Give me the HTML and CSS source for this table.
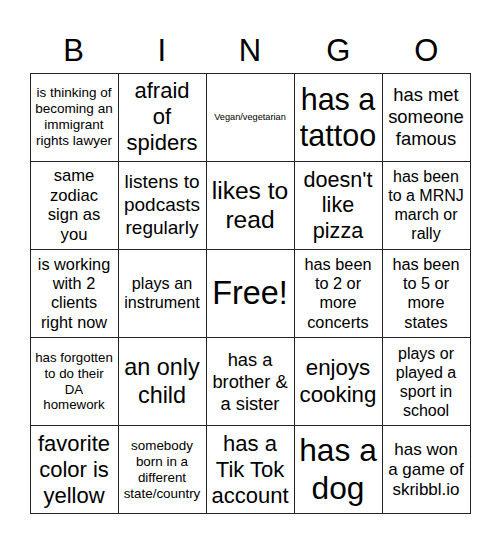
FILE: index.html
```html
<!DOCTYPE html>
<html>
<head>
<meta charset="utf-8">
<link rel="stylesheet" href="styles.css">
</head>
<body>
<div class="card">
  <div class="head">
    <span>B</span><span>I</span><span>N</span><span>G</span><span>O</span>
  </div>
  <div class="grid">
    <div class="cell s134">is thinking of<br>becoming an<br>immigrant<br>rights lawyer</div>
    <div class="cell s22">afraid<br>of<br>spiders</div>
    <div class="cell s91">Vegan/vegetarian</div>
    <div class="cell s304">has a<br>tattoo</div>
    <div class="cell s183">has met<br>someone<br>famous</div>

    <div class="cell s165">same<br>zodiac<br>sign as<br>you</div>
    <div class="cell s19">listens to<br>podcasts<br>regularly</div>
    <div class="cell s245">likes to<br>read</div>
    <div class="cell s215">doesn't<br>like<br>pizza</div>
    <div class="cell s16">has been<br>to a MRNJ<br>march or<br>rally</div>

    <div class="cell s162">is working<br>with 2<br>clients<br>right now</div>
    <div class="cell s161">plays an<br>instrument</div>
    <div class="cell s324">Free!</div>
    <div class="cell s162">has been<br>to 2 or<br>more<br>concerts</div>
    <div class="cell s162">has been<br>to 5 or<br>more<br>states</div>

    <div class="cell s132">has forgotten<br>to do their<br>DA<br>homework</div>
    <div class="cell s234">an only<br>child</div>
    <div class="cell s182">has a<br>brother &amp;<br>a sister</div>
    <div class="cell s222">enjoys<br>cooking</div>
    <div class="cell s16">plays or<br>played a<br>sport in<br>school</div>

    <div class="cell s22">favorite<br>color is<br>yellow</div>
    <div class="cell s133">somebody<br>born in a<br>different<br>state/country</div>
    <div class="cell s22">has a<br>Tik Tok<br>account</div>
    <div class="cell s316">has a<br>dog</div>
    <div class="cell s17">has won<br>a game of<br>skribbl.io</div>
  </div>
</div>
</body>
</html>
```

FILE: styles.css
```css
html, body {
  margin: 0;
  padding: 0;
  background: #fff;
}
body {
  font-family: "Liberation Sans", Arial, sans-serif;
  color: #000;
  width: 500px;
  height: 544px;
}
.card {
  width: 441px;
  margin: 0 auto;
  padding-top: 33px;
}
.head {
  display: grid;
  grid-template-columns: repeat(5, 1fr);
  height: 36px;
  line-height: 36px;
  font-size: 31px;
  text-align: center;
  margin-bottom: 3.5px;
}
.grid {
  display: grid;
  grid-template-columns: repeat(5, 88px);
  grid-auto-rows: 88.2px;
  border-left: 1px solid #222;
  border-top: 1px solid #222;
  box-sizing: border-box;
  width: 441px;
}
.cell {
  border-right: 1px solid #222;
  border-bottom: 1px solid #222;
  display: flex;
  align-items: center;
  justify-content: center;
  text-align: center;
  line-height: 1.19;
  white-space: nowrap;
  overflow: hidden;
}
.s91 { font-size: 9.2px; }
.s132 { font-size: 13.3px; }
.s133 { font-size: 13.4px; }
.s134 { font-size: 13.5px; }
.s16 { font-size: 16px; }
.s161 { font-size: 16.2px; }
.s162 { font-size: 16.3px; }
.s165 { font-size: 16.6px; }
.s17 { font-size: 17px; }
.s182 { font-size: 18.3px; }
.s183 { font-size: 18.4px; }
.s19 { font-size: 19px; }
.s215 { font-size: 21.6px; }
.s22 { font-size: 22px; }
.s222 { font-size: 22.3px; }
.s234 { font-size: 23.4px; }
.s245 { font-size: 24.6px; }
.s304 { font-size: 30.5px; }
.s316 { font-size: 31.7px; }
.s324 { font-size: 32.4px; }
```
